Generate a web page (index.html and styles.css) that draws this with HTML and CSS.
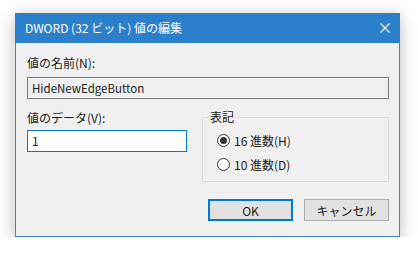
FILE: index.html
```html
<!DOCTYPE html>
<html>
<head>
    <title>DWORD (32 ビット) 値の編集</title>
    <link rel="stylesheet" href="styles.css">
</head>
<body>
    <div class="window">
        <div class="titlebar">
            <span class="title">DWORD (32 ビット) 値の編集</span>
            <svg class="close" width="10" height="10" viewBox="0 0 10 10">
                <path d="M0.5 0.5 L9.5 9.5 M9.5 0.5 L0.5 9.5" stroke="#fff" stroke-width="1.1"/>
            </svg>
        </div>

        <div class="content">
            <div class="label name-label">値の名前(N):</div>
            <div class="textbox readonly">HideNewEdgeButton</div>

            <div class="row">
                <div class="data-col">
                    <div class="label">値のデータ(V):</div>
                    <div class="textbox focused">1</div>
                </div>

                <fieldset class="group">
                    <legend>表記</legend>
                    <label class="radio">
                        <span class="dot checked"></span>16 進数(H)
                    </label>
                    <label class="radio">
                        <span class="dot"></span>10 進数(D)
                    </label>
                </fieldset>
            </div>

            <div class="buttons">
                <button class="btn default">OK</button>
                <button class="btn">キャンセル</button>
            </div>
        </div>
    </div>
</body>
</html>
```

FILE: styles.css
```css
body {
    margin: 0;
    background-color: #ffffff;
    font-family: "Noto Sans CJK JP", "Noto Sans", sans-serif;
    font-size: 12px;
    color: #1a1a1a;
}

.window {
    margin: 13px 0 0 15px;
    width: 385px;
    height: 224px;
    box-sizing: border-box;
    background-color: #f0f0f0;
    border: 1px solid #3a86cc;
    border-top: none;
    box-shadow: 0 4px 16px rgba(0,0,0,0.28);
}

.titlebar {
    height: 30px;
    margin: 0 -1px;
    background-color: #2b7fcb;
    display: flex;
    align-items: center;
    justify-content: space-between;
    padding: 0 10px 0 10px;
}

.title {
    color: #ffffff;
    font-size: 12px;
    line-height: 16px;
}

.close {
    display: block;
}

.content {
    padding: 12px 10px 0 11px;
}

.label {
    line-height: 16px;
}

.name-label {
    margin-bottom: 6px;
}

.textbox {
    height: 22px;
    box-sizing: border-box;
    line-height: 20px;
    padding: 0 4px;
    border: 1px solid #7a7a7a;
}

.readonly {
    background-color: #f0f0f0;
    font-size: 11.5px;
}

.focused {
    margin-top: 4px;
    background-color: #ffffff;
    border-color: #0078d7;
}

.row {
    display: flex;
    gap: 15px;
    margin-top: 11px;
}

.data-col {
    width: 160px;
}

.group {
    margin: -1px 0 0 0;
    padding: 7px 0 0 14px;
    width: 187px;
    height: 73px;
    box-sizing: border-box;
    border: 1px solid #dcdcdc;
}

.group legend {
    padding: 0 1px;
    margin-left: -8px;
    line-height: 16px;
}

.radio {
    display: flex;
    align-items: center;
    height: 16px;
    margin-bottom: 8px;
}

.dot {
    width: 13px;
    height: 13px;
    box-sizing: border-box;
    border: 1px solid #333333;
    border-radius: 50%;
    background-color: #ffffff;
    margin-right: 4px;
    position: relative;
}

.dot.checked::after {
    content: "";
    position: absolute;
    left: 2px;
    top: 2px;
    width: 7px;
    height: 7px;
    border-radius: 50%;
    background-color: #333333;
}

.buttons {
    display: flex;
    justify-content: flex-end;
    gap: 11px;
    margin-top: 17px;
}

.btn {
    width: 85px;
    height: 22px;
    padding: 0;
    font-family: inherit;
    font-size: 12px;
    color: #1a1a1a;
    background-color: #e1e1e1;
    border: 1px solid #adadad;
}

.btn.default {
    border: 2px solid #0078d7;
}
```
